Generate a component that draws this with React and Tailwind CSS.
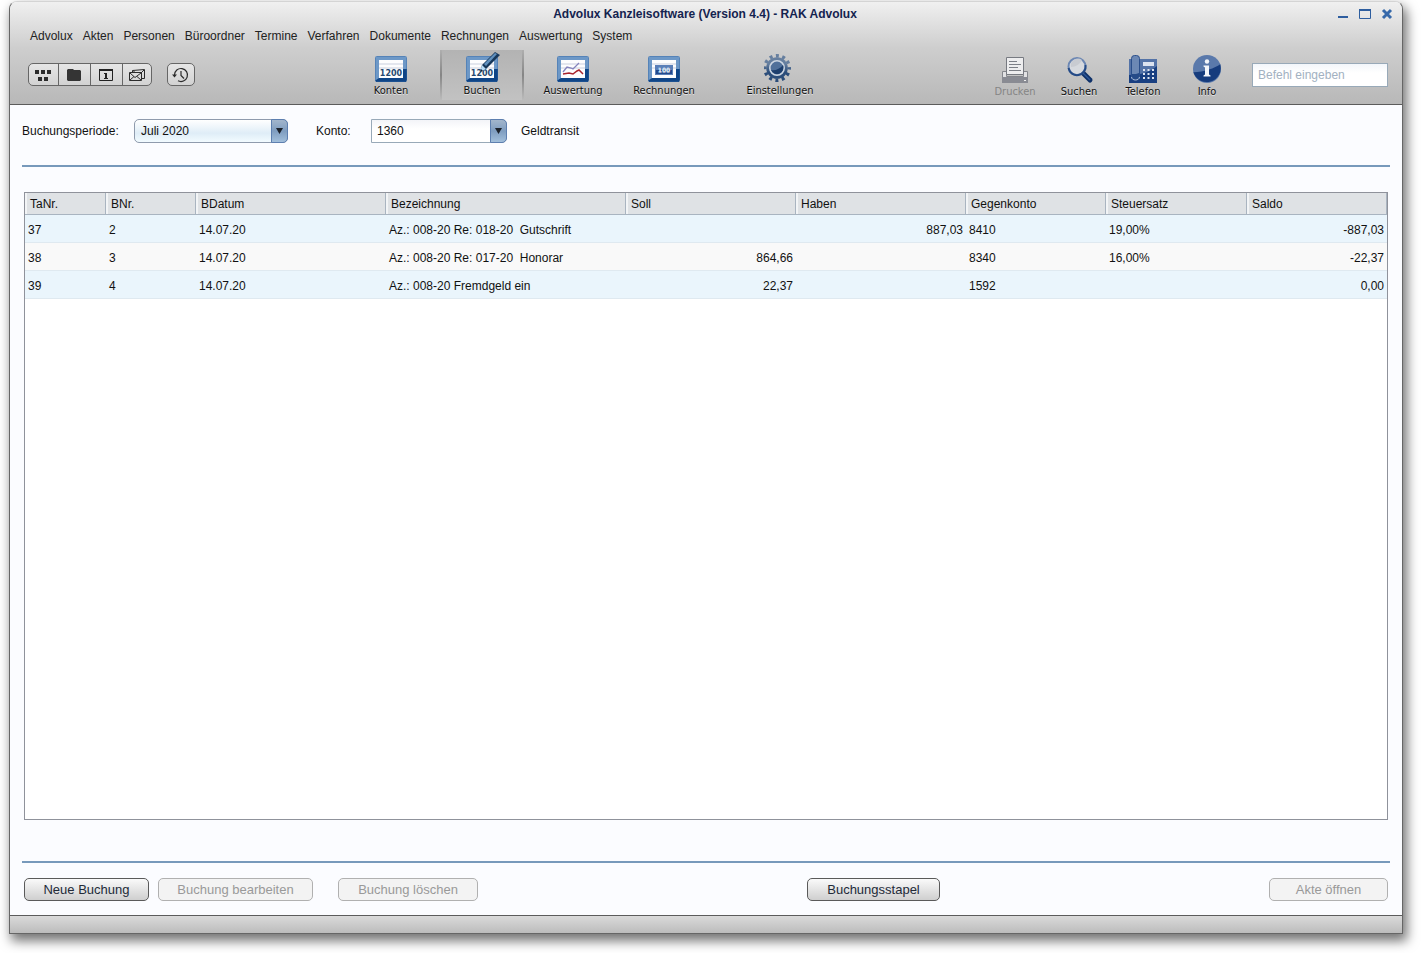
import { useState } from 'react';

const MENU = ['Advolux', 'Akten', 'Personen', 'Büroordner', 'Termine', 'Verfahren', 'Dokumente', 'Rechnungen', 'Auswertung', 'System'];

const COLUMNS = [
  { key: 'taNr', label: 'TaNr.', width: 'w-[81px]' },
  { key: 'bNr', label: 'BNr.', width: 'w-[90px]' },
  { key: 'datum', label: 'BDatum', width: 'w-[190px]' },
  { key: 'bezeichnung', label: 'Bezeichnung', width: 'w-[240px]' },
  { key: 'soll', label: 'Soll', width: 'w-[170px]', right: true },
  { key: 'haben', label: 'Haben', width: 'w-[170px]', right: true },
  { key: 'gegenkonto', label: 'Gegenkonto', width: 'w-[140px]' },
  { key: 'steuersatz', label: 'Steuersatz', width: 'w-[141px]' },
  { key: 'saldo', label: 'Saldo', width: 'w-auto', right: true },
];

const BUCHUNGEN = [
  { taNr: '37', bNr: '2', datum: '14.07.20', bezeichnung: 'Az.: 008-20 Re: 018-20  Gutschrift', soll: '', haben: '887,03', gegenkonto: '8410', steuersatz: '19,00%', saldo: '-887,03' },
  { taNr: '38', bNr: '3', datum: '14.07.20', bezeichnung: 'Az.: 008-20 Re: 017-20  Honorar', soll: '864,66', haben: '', gegenkonto: '8340', steuersatz: '16,00%', saldo: '-22,37' },
  { taNr: '39', bNr: '4', datum: '14.07.20', bezeichnung: 'Az.: 008-20 Fremdgeld ein', soll: '22,37', haben: '', gegenkonto: '1592', steuersatz: '', saldo: '0,00' },
];

// Shared blue frame of the accounting icons
const CardFrame = ({ children }) => (
  <svg width="36" height="32" viewBox="0 0 36 32" aria-hidden="true">
    <path d="M3 5h30v25H3z" fill="#6d98c7" />
    <path d="M33 17v13H3v-2l3-2h20l4-9z" fill="#0f4587" />
    <path d="M2.500 29V5.500a1 1 0 0 1 1-1h29a1 1 0 0 1 1 1V17" fill="none" stroke="#5583b8" />
    <path d="M33.500 17v11.500a1 1 0 0 1-1 1h-29a1 1 0 0 1-1-1" fill="none" stroke="#1c5191" />
    <path d="M6 8h24v18H6z" fill="#fdfdfe" />
    <path d="M6 11h24v2H6zM6 15h24v2H6z" fill="#e3e6ee" />
    {children}
  </svg>
);

const Number1200 = () => (
  <text x="18" y="24" textAnchor="middle" fontFamily="DejaVu Sans" fontWeight="bold" fontSize="8" fill="#284a70">1200</text>
);

const KontenIcon = () => <CardFrame><Number1200 /></CardFrame>;

const BuchenIcon = () => (
  <CardFrame>
    <Number1200 />
    <path d="M16 20l2-7L31 0l5 3-14 14z" fill="#16375a" />
    <path d="M20 12L31 1l2 1-11 12z" fill="#5f8fbd" />
    <path d="M16 20l2-7 4 4z" fill="#b9dcf5" />
    <path d="M16 20l1-3 2 2z" fill="#112233" />
  </CardFrame>
);

const AuswertungIcon = () => (
  <CardFrame>
    <path d="M8 20l4-5 4 1 2 1 6-6" fill="none" stroke="#8583bd" strokeWidth="1.300" />
    <path d="M8 22l6-1 4 1 4-3 2-1 4 4" fill="none" stroke="#a8242d" strokeWidth="1.500" />
  </CardFrame>
);

const RechnungenIcon = () => (
  <CardFrame>
    <path d="M9 13h18v10H9z" fill="#5a7fb8" />
    <path d="M10 18h16v4H10z" fill="#234a8d" />
    <text x="18" y="20" textAnchor="middle" fontFamily="DejaVu Sans" fontWeight="bold" fontSize="6" fill="#dde6f4">100</text>
  </CardFrame>
);

const GearIcon = () => (
  <svg width="32" height="32" viewBox="3 0 32 32" aria-hidden="true">
    <defs>
      <linearGradient id="gear" x1="0" y1="0" x2="0" y2="1">
        <stop offset="0.300" stopColor="#667f9f" />
        <stop offset="0.700" stopColor="#2b4d7a" />
      </linearGradient>
    </defs>
    <circle cx="16" cy="16" r="12.200" fill="none" stroke="url(#gear)" strokeWidth="3.600" strokeDasharray="3 3.388" strokeDashoffset="1.500" />
    <circle cx="16" cy="16" r="10.800" fill="url(#gear)" />
    <circle cx="16" cy="16" r="7.200" fill="#50709a" stroke="#ccd5e1" strokeWidth="1.600" />
    <path d="M10 18c4 1 9-1 12-5a6.300 6.300 0 0 1-12 5z" fill="#1c3e6d" />
  </svg>
);

const PrinterIcon = () => (
  <svg width="32" height="32" viewBox="0 0 32 32" aria-hidden="true">
    <path d="M3.500 18.500h4v5h17v-5h4v11h-25z" fill="#e2e2e4" stroke="#85878d" />
    <path d="M3 24h26v6H3z" fill="#898b93" />
    <path d="M7.500 4.500h17v17h-17z" fill="#ededee" stroke="#777a81" />
    <path d="M10 8.500h8M10 11.500h12M10 14.500h9M10 17.500h12" stroke="#7c7f86" />
    <path d="M25 27h2v1h-2z" fill="#eee" />
  </svg>
);

const SearchIcon = () => (
  <svg width="32" height="32" viewBox="0 0 32 32" aria-hidden="true">
    <path d="M20 20l7 7" stroke="#0e3068" strokeWidth="5" strokeLinecap="round" />
    <path d="M20 20l7 7" stroke="#2c5798" strokeWidth="1.500" />
    <circle cx="14" cy="13.500" r="8.500" fill="#d6d9de" stroke="#6c87b3" strokeWidth="2" />
    <path d="M5.500 15a8.500 8.500 0 0 0 17-3" fill="none" stroke="#254b87" strokeWidth="2" />
    <path d="M8 14c5 0 9-3 11-7a7 7 0 0 0-11 7z" fill="#c8cbd1" />
  </svg>
);

const PhoneIcon = () => (
  <svg width="32" height="32" viewBox="0 1 32 32" aria-hidden="true">
    <path d="M2 7h28v24H2z" fill="#5473a7" />
    <path d="M2 23c12 0 21-3 28-9v17H2z" fill="#183f81" />
    <rect x="4.500" y="3.500" width="8" height="24" rx="3" fill="#6c88b4" stroke="#2b4f8b" />
    <path d="M5 22c3 0 5 0 7-1v4c0 3-7 3-7 0z" fill="#264b88" />
    <path d="M4.500 25c0 4 8 4 8 0" fill="none" stroke="#a9bad6" />
    <path d="M16 10h11v4H16z" fill="#dce3ef" />
    <path d="M16 18h11M16 22h11M16 26h11" stroke="#dce3ef" strokeWidth="2" strokeDasharray="2 2.500" />
  </svg>
);

const InfoIcon = () => (
  <svg width="32" height="32" viewBox="0 1 32 32" aria-hidden="true">
    <circle cx="16" cy="17" r="14" fill="#5a79ab" />
    <path d="M2.400 20.300C13 20 24 16 29.200 12.200A14 14 0 0 1 2.400 20.300z" fill="#163c7d" />
    <circle cx="16" cy="9.500" r="2.200" fill="#f4f6fa" />
    <path d="M13 13.500h5v9l1.500 1v1h-7v-1l1.500-1v-7l-1.500-1v-1z" fill="#f4f6fa" />
  </svg>
);

const Tool = ({ label, icon, active, disabled, className }) => (
  <button
    type="button"
    disabled={disabled}
    className={`flex h-[50px] flex-col items-center pt-0.5 font-['DejaVu_Sans_Condensed','DejaVu_Sans',sans-serif] text-[11px] leading-[14px] ${disabled ? 'text-[#858585]' : 'text-[#111] [text-shadow:0_1px_0_#ffffff99]'} ${active ? 'border-x-2 bg-linear-to-b from-[#b3b3b3] to-[#c2c2c2] [border-image:linear-gradient(#b0b0b0,#858585,#bdbdbd)_1]' : ''} ${className}`}
  >
    {icon}
    {label}
  </button>
);

const SmallButton = ({ label, className = '', children }) => (
  <button type="button" aria-label={label} className={`flex h-full items-center justify-center ${className}`}>
    <svg width="20" height="20" viewBox="0 0 20 20" aria-hidden="true">{children}</svg>
  </button>
);

const ActionButton = ({ disabled, className, children }) => (
  <button
    type="button"
    disabled={disabled}
    className={`h-[23px] rounded-[5px] border text-[13px] leading-5 ${disabled ? 'border-[#b0b0b0] bg-[#f3f3f3] text-[#999]' : 'border-[#5a5a5a] bg-linear-to-b from-[#fafafa] to-[#cfcfcf] text-[#222a38]'} ${className}`}
  >
    {children}
  </button>
);

const ComboArrow = () => (
  <span className="pointer-events-none absolute inset-y-0 right-0 flex w-[17px] items-center justify-center rounded-r-[5px] border border-[#5d7fb0] bg-linear-to-b from-[#a3b6cc] via-[#7f9dc0] to-[#a2bfdb]">
    <svg width="7" height="8" viewBox="0 0 7 8" aria-hidden="true"><path d="M0 1h7L3.500 7z" fill="#1c222b" /></svg>
  </span>
);

const Header = () => (
  <header className="rounded-t-[7px] border-b border-[#5b5b5b] bg-linear-to-b from-[#f0f0f0] via-[#cecece] via-45% to-[#b8b8b8]">
    <div className="flex h-6 items-center pr-2 pl-16">
      <h1 className="flex-1 text-center text-[12px] font-bold text-[#14234f]">Advolux Kanzleisoftware (Version 4.4) - RAK Advolux</h1>
      <div className="flex gap-2">
        <button type="button" aria-label="Minimieren">
          <svg width="14" height="14" viewBox="0 0 14 14"><path d="M2 9h10v2H2z" fill="#2e5e9f" /></svg>
        </button>
        <button type="button" aria-label="Maximieren">
          <svg width="14" height="14" viewBox="0 0 14 14"><path d="M1.500 2.500h11v9h-11z" fill="none" stroke="#2e5e9f" /><path d="M1 2h12v2H1z" fill="#2e5e9f" /></svg>
        </button>
        <button type="button" aria-label="Schließen">
          <svg width="14" height="14" viewBox="0 0 14 14"><path d="M3 3l8 8M11 3l-8 8" stroke="#3769aa" strokeWidth="3" /></svg>
        </button>
      </div>
    </div>
    <nav className="mb-1 flex h-5 items-center gap-2.5 pl-5 text-[12px] text-[#222]">
      {MENU.map(m => <button key={m} type="button">{m}</button>)}
    </nav>
    <div className="flex h-[54px] items-start pr-3.5 pl-[18px]">
      <div className="flex gap-[15px] pt-[13px]">
        <div className="flex h-[23px] w-[124px] divide-x divide-[#666] rounded-[5px] border border-[#666] bg-linear-to-b from-[#e6e6e6] to-[#d2d2d2]">
          <SmallButton label="Übersicht" className="w-[30px]">
            <path d="M1 5h4v4H1zM7 5h4v4H7zM13 5h4v4h-4zM4 12h4v4H4zM10 12h4v4h-4z" fill="#2b2b2b" />
          </SmallButton>
          <SmallButton label="Akten" className="w-8">
            <path d="M2 5l1-1h5l1 1h6l1 1v9l-1 1H3l-1-1z" fill="#343434" />
          </SmallButton>
          <SmallButton label="Kalender" className="w-8">
            <path d="M2.500 4.500h13v11h-13z" fill="none" stroke="#222" />
            <path d="M2 4h14v2H2z" fill="#222" />
            <path d="M7 9V8h3v5h1v1H7v-1h1V9z" fill="#222" />
          </SmallButton>
          <SmallButton label="Post" className="flex-1">
            <path d="M5.500 7.500v-2l12-1v9h-3M6 5.500l2 2M17 5l-3 3" fill="none" stroke="#2b2b2b" />
            <path d="M2.500 7.500h12v8h-12zM3 8l5 4.500L14 8M3 15l4-3.500M14 15l-4-3.500" fill="none" stroke="#2b2b2b" />
          </SmallButton>
        </div>
        <SmallButton label="Verlauf" className="h-[23px]! w-7 rounded-[5px] border border-[#666] bg-linear-to-b from-[#e6e6e6] to-[#d2d2d2]">
          <path d="M3.500 10A6.500 6.500 0 1 1 7 15.800M10 6v4.500l3 3" fill="none" stroke="#2b2b2b" strokeWidth="1.200" />
          <path d="M1 9.500h5L3.500 12.500z" fill="#2b2b2b" />
        </SmallButton>
      </div>
      <div className="ml-[154px] flex gap-[7px]">
        <Tool label="Konten" icon={<KontenIcon />} className="w-[84px]" />
        <Tool label="Buchen" icon={<BuchenIcon />} className="w-[84px]" active />
        <Tool label="Auswertung" icon={<AuswertungIcon />} className="w-[84px]" />
        <Tool label="Rechnungen" icon={<RechnungenIcon />} className="w-[84px]" />
      </div>
      <Tool label="Einstellungen" icon={<GearIcon />} className="ml-8 w-[84px]" />
      <div className="ml-auto flex pt-px">
        <Tool label="Drucken" icon={<PrinterIcon />} className="w-16" disabled />
        <Tool label="Suchen" icon={<SearchIcon />} className="w-16" />
        <Tool label="Telefon" icon={<PhoneIcon />} className="w-16" />
        <Tool label="Info" icon={<InfoIcon />} className="w-16" />
      </div>
      <input
        type="text"
        aria-label="Befehl eingeben"
        placeholder="Befehl eingeben"
        className="mt-[13px] ml-[13px] h-6 w-[136px] border border-[#98a9b8] bg-linear-to-b from-[#f3f6fa] to-white to-40% px-[5px] text-[12px] placeholder:text-[#a2b1c1]"
      />
    </div>
  </header>
);

const BuchungenTable = () => (
  <div className="mx-0.5 mt-[25px] flex-1 border border-[#8f929b] bg-white">
    <table className="w-full table-fixed border-separate border-spacing-0 text-left">
      <thead>
        <tr className="bg-[#dfe2e5]">
          {COLUMNS.map(c => (
            <th key={c.key} scope="col" className={`${c.width} border-r border-b border-[#a9b4c0] p-0 font-normal`}>
              <div className="border-l-2 border-[#f2f4f6] pt-px pl-[3px] leading-5">{c.label}</div>
            </th>
          ))}
        </tr>
      </thead>
      <tbody>
        {BUCHUNGEN.map(b => (
          <tr key={b.taNr} className="h-7 odd:bg-[#eaf5fc] even:bg-[#f9f9f9]">
            {COLUMNS.map(c => (
              <td key={c.key} className={`border-b border-[#dfe9f0] p-0 px-[3px] pt-0.5 whitespace-pre ${c.right ? 'text-right' : ''}`}>{b[c.key]}</td>
            ))}
          </tr>
        ))}
      </tbody>
    </table>
  </div>
);

const App = () => {
  const [periode, setPeriode] = useState('Juli 2020');
  const [konto, setKonto] = useState('1360');

  return (
    <div className="flex min-h-screen flex-col bg-white pt-px pr-[19px] pb-[19px] pl-[9px] font-['Liberation_Sans',Arial,sans-serif] text-[12px] leading-4 text-[#111]">
      <div className="flex flex-1 flex-col rounded-t-[8px] border border-[#666] border-t-[#d4d4d4] bg-[#fbfcff] shadow-[3px_6px_12px_1px_rgba(0,0,0,0.55)]">
        <Header />

        <main className="flex flex-1 flex-col px-3 pb-3.5">
          <div className="flex h-[62px] items-start border-b-2 border-[#7799bb] pt-3.5">
            <label htmlFor="periode" className="w-[112px] leading-6">Buchungsperiode:</label>
            <div className="relative h-6 w-[154px]">
              <select
                id="periode"
                value={periode}
                onChange={e => setPeriode(e.target.value)}
                className="h-full w-full appearance-none rounded-[5px] border border-[#8f9bad] bg-linear-to-b from-white via-[#dfedf7] via-60% to-[#f2fbff] px-[6px]"
              >
                <option>Juli 2020</option>
              </select>
              <ComboArrow />
            </div>
            <label htmlFor="konto" className="ml-7 w-[55px] leading-6">Konto:</label>
            <div className="relative h-6 w-[136px]">
              <select
                id="konto"
                value={konto}
                onChange={e => setKonto(e.target.value)}
                className="h-full w-full appearance-none rounded-r-[5px] border border-[#98a9b8] bg-linear-to-b from-[#f3f4f8] to-white to-40% px-[5px]"
              >
                <option>1360</option>
              </select>
              <ComboArrow />
            </div>
            <span className="ml-3.5 leading-6">Geldtransit</span>
          </div>

          <BuchungenTable />

          <div className="mt-[41px] flex border-t-2 border-[#7799bb] px-0.5 pt-[15px]">
            <ActionButton className="w-[125px]">Neue Buchung</ActionButton>
            <ActionButton className="ml-[9px] w-[155px]" disabled>Buchung bearbeiten</ActionButton>
            <ActionButton className="ml-[25px] w-[140px]" disabled>Buchung löschen</ActionButton>
            <ActionButton className="mx-auto w-[133px]">Buchungsstapel</ActionButton>
            <ActionButton className="w-[119px]" disabled>Akte öffnen</ActionButton>
          </div>
        </main>

        <footer className="h-[18px] border-t border-[#5b5b5b] bg-linear-to-b from-[#dadada] to-[#bcbcbc]" />
      </div>
    </div>
  );
};

export default App;
